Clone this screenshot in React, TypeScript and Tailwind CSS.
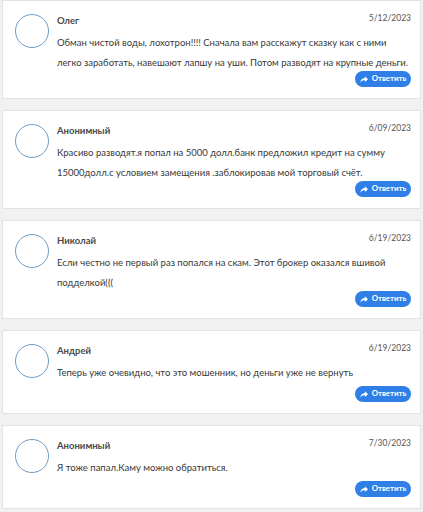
const comments = [
  {
    name: 'Олег',
    date: '5/12/2023',
    text: 'Обман чистой воды, лохотрон!!!! Сначала вам расскажут сказку как с ними\nлегко заработать, навешают лапшу на уши. Потом разводят на крупные деньги.',
  },
  {
    name: 'Анонимный',
    date: '6/09/2023',
    text: 'Красиво разводят.я попал на 5000 долл.банк предложил кредит на сумму 15000долл.с условием замещения .заблокировав мой торговый счёт.',
  },
  {
    name: 'Николай',
    date: '6/19/2023',
    text: 'Если честно не первый раз попался на скам. Этот брокер оказался вшивой подделкой(((',
  },
  {
    name: 'Андрей',
    date: '6/19/2023',
    text: 'Теперь уже очевидно, что это мошенник, но деньги уже не вернуть',
  },
  {
    name: 'Анонимный',
    date: '7/30/2023',
    text: 'Я тоже папал.Каму можно обратиться.',
  },
];

function ReplyIcon() {
  return (
    <svg width="8" height="7" viewBox="0 0 14 12" fill="white">
      <path d="M8.5 0.5 L14 5.5 L8.5 10.5 V7.5 C5 7.5 2.5 8.5 0.5 11.5 C1 7 3.5 3.8 8.5 3.5 Z" />
    </svg>
  );
}

export default function App() {
  return (
    <div
      className="min-h-screen bg-[#f1f1f1] px-[2px]"
      style={{ fontFamily: 'Lato, "Noto Sans", sans-serif' }}
    >
      {comments.map((c, i) => (
        <div
          key={i}
          className="min-h-[84px] bg-white border border-[#e3e3e3] mb-[11px] pl-[12px] pr-[9px] pt-[13px] pb-[11px] flex gap-[8px]"
        >
          <div className="w-[34px] h-[34px] shrink-0 rounded-full border border-[#6f9cc4] bg-white" />
          <div className="flex-1 min-w-0 flex flex-col">
            <div className="flex justify-between items-start">
              <span className="text-[9.5px] leading-[14px] font-bold text-[#4a4a4a]">{c.name}</span>
              <span className="text-[8.5px] leading-[14px] -mt-[3px] text-[#555]">{c.date}</span>
            </div>
            <p className="mt-[5px] -mb-[2px] whitespace-pre-line text-[9.5px] leading-[20px] text-[#383838]">{c.text}</p>
            <div className="flex justify-end mt-auto">
              <button className="h-[16px] w-[56px] rounded-full bg-[#2f7fe6] text-white text-[7.8px] font-bold flex items-center justify-center gap-[4px]">
                <ReplyIcon />
                Ответить
              </button>
            </div>
          </div>
        </div>
      ))}
    </div>
  );
}
